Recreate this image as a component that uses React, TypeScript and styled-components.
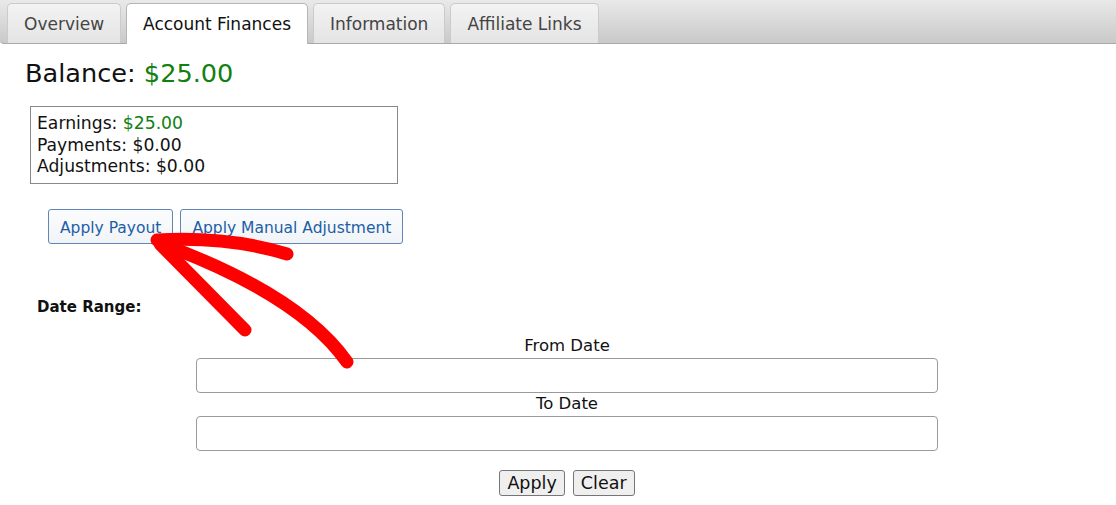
import styled, { createGlobalStyle } from 'styled-components';

const GlobalStyle = createGlobalStyle`
  html, body {
    margin: 0;
    padding: 0;
    background: #fff;
  }
  body {
    font-family: "DejaVu Sans", Verdana, sans-serif;
    color: #111;
  }
`;

const Page = styled.div`
  position: relative;
  width: 1116px;
  height: 505px;
  overflow: hidden;
`;

const TabBar = styled.div`
  display: flex;
  align-items: flex-end;
  gap: 5px;
  height: 43px;
  padding-left: 7px;
  background: linear-gradient(#e9e9e9, #c9c9c9);
  border-bottom: 1px solid #a9a9a9;
  border-bottom-left-radius: 4px;
`;

const Tab = styled.div<{ $active?: boolean }>`
  display: flex;
  align-items: center;
  box-sizing: border-box;
  height: ${p => (p.$active ? '41px' : '40px')};
  margin-bottom: ${p => (p.$active ? '-1px' : '0')};
  padding: 0 16px;
  font-size: 17px;
  color: ${p => (p.$active ? '#111' : '#444')};
  background: ${p => (p.$active ? '#fff' : 'linear-gradient(#f3f3f3, #e4e4e4)')};
  border: 1px solid ${p => (p.$active ? '#b5b5b5' : '#cbcbcb')};
  border-bottom: none;
  border-radius: 5px 5px 0 0;
`;

const Content = styled.div`
  padding: 14px 0 0 25px;
`;

const Balance = styled.div`
  font-size: 25.6px;
  line-height: 30px;
  color: #111;
`;

const Money = styled.span`
  color: #118011;
`;

const SummaryBox = styled.div`
  box-sizing: border-box;
  width: 368px;
  height: 78px;
  margin: 18px 0 0 5px;
  padding: 6px 6px;
  border: 1px solid #888;
  font-size: 17.2px;
  line-height: 21.5px;
`;

const ActionRow = styled.div`
  display: flex;
  gap: 7px;
  margin: 25px 0 0 23px;
`;

const ActionButton = styled.button`
  height: 35px;
  padding: 2px 11px 0;
  font-family: "DejaVu Sans", Verdana, sans-serif;
  font-size: 15.5px;
  color: #1c5ea6;
  background: linear-gradient(#fbfcfd, #f1f4f7);
  border: 1px solid #5f86b6;
  border-radius: 3px;
`;

const RangeTitle = styled.div`
  margin: 54px 0 0 12px;
  font-size: 15px;
  font-weight: bold;
`;

const Form = styled.div`
  display: flex;
  flex-direction: column;
  align-items: center;
  width: 742px;
  margin: 20px 0 0 171px;
`;

const FieldLabel = styled.div`
  font-size: 16.5px;
  line-height: 20px;
  margin-bottom: 2px;
`;

const DateInput = styled.input`
  box-sizing: border-box;
  width: 742px;
  height: 35px;
  border: 1px solid #9a9a9a;
  border-radius: 4px;
  margin-bottom: 1px;
`;

const FormButtons = styled.div`
  display: flex;
  gap: 8px;
  margin-top: 18px;
`;

const PlainButton = styled.button`
  height: 26px;
  padding: 0 7px;
  font-family: "DejaVu Sans", Verdana, sans-serif;
  font-size: 17.5px;
  color: #111;
  background: #efefef;
  border: 1px solid #767676;
  border-radius: 3px;
`;

const Overlay = styled.svg`
  position: absolute;
  inset: 0;
  pointer-events: none;
`;

const tabs = ['Overview', 'Account Finances', 'Information', 'Affiliate Links'];

export default function App() {
  return (
    <Page>
      <GlobalStyle />
      <TabBar>
        {tabs.map(t => (
          <Tab key={t} $active={t === 'Account Finances'}>{t}</Tab>
        ))}
      </TabBar>
      <Content>
        <Balance>
          Balance: <Money>$25.00</Money>
        </Balance>
        <SummaryBox>
          <div>Earnings: <Money>$25.00</Money></div>
          <div>Payments: $0.00</div>
          <div>Adjustments: $0.00</div>
        </SummaryBox>
        <ActionRow>
          <ActionButton>Apply Payout</ActionButton>
          <ActionButton>Apply Manual Adjustment</ActionButton>
        </ActionRow>
        <RangeTitle>Date Range:</RangeTitle>
        <Form>
          <FieldLabel>From Date</FieldLabel>
          <DateInput />
          <FieldLabel>To Date</FieldLabel>
          <DateInput />
          <FormButtons>
            <PlainButton>Apply</PlainButton>
            <PlainButton>Clear</PlainButton>
          </FormButtons>
        </Form>
      </Content>
      {/* hand-drawn red arrow pointing at Apply Payout */}
      <Overlay width="1116" height="505" viewBox="0 0 1116 505">
        <g fill="none" stroke="#ff0000" strokeWidth="13" strokeLinecap="round" strokeLinejoin="round">
          <path d="M157 240 Q 228 236 287 254" />
          <path d="M160 244 L 245 330" />
          <path d="M162 244 Q 300 295 347 362" />
        </g>
      </Overlay>
    </Page>
  );
}
